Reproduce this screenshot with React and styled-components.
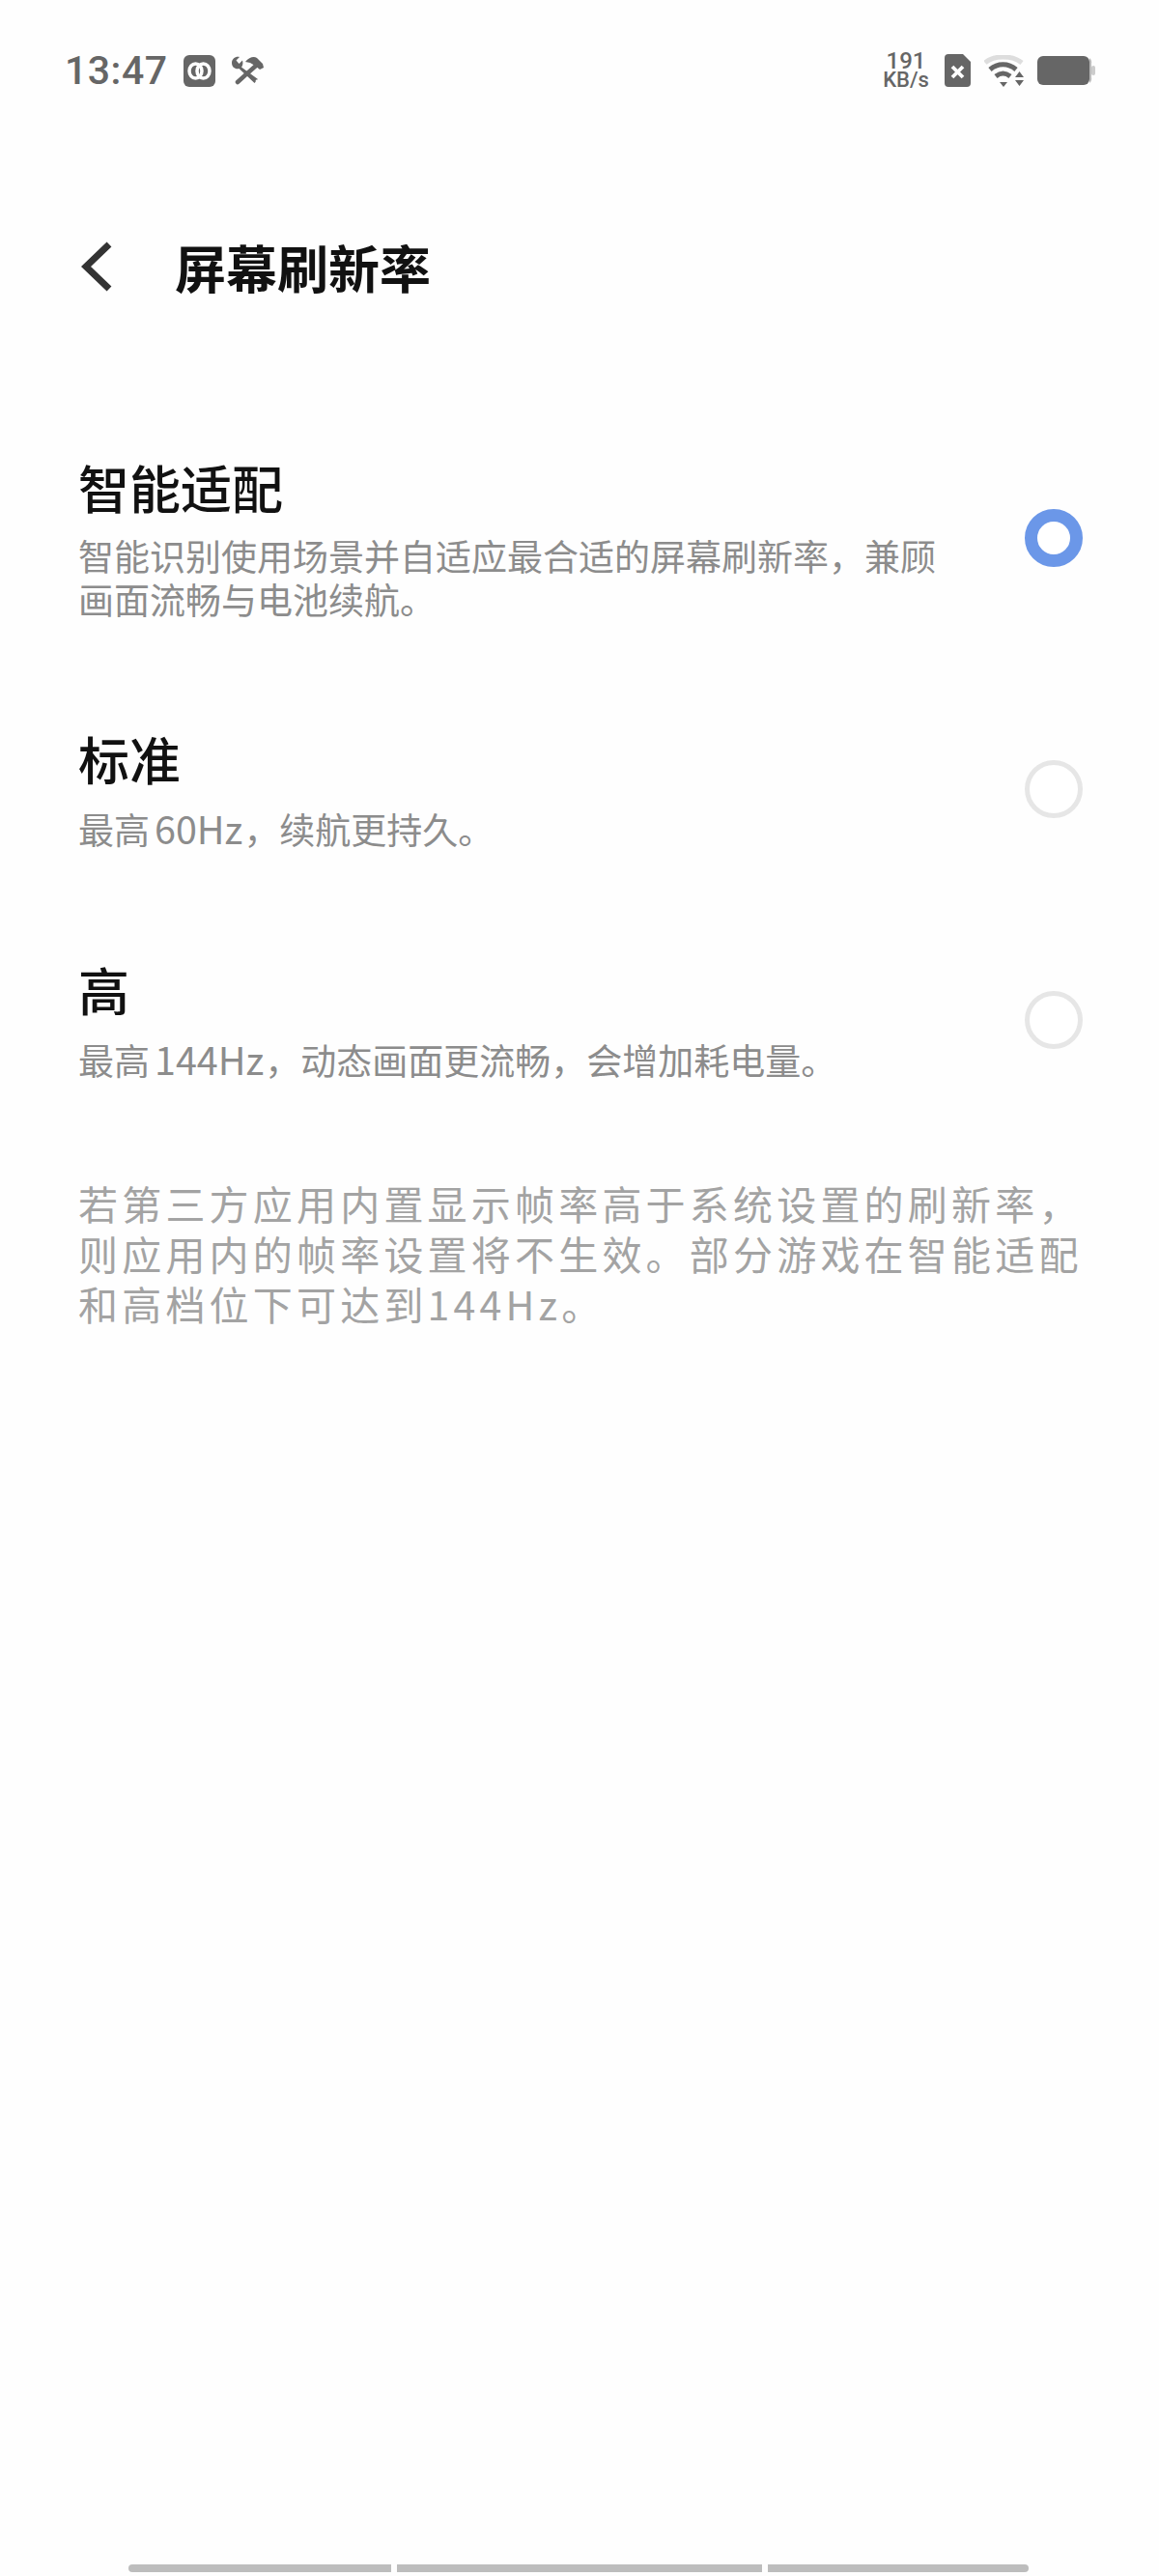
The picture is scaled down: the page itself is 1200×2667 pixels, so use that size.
import React from "react";
import styled, { createGlobalStyle } from "styled-components";

const cjk = `"Noto Sans CJK SC", "Noto Sans", sans-serif`;

const GlobalStyle = createGlobalStyle`
  html, body {
    margin: 0;
    padding: 0;
    background: #fefefe;
  }
  * {
    box-sizing: border-box;
  }
`;

const Page = styled.div`
  width: 1200px;
  height: 2667px;
  display: flex;
  flex-direction: column;
  background: #fefefe;
  font-family: ${cjk};
  overflow: hidden;
`;

const StatusBar = styled.div`
  height: 74px;
  margin-top: 36px;
  padding: 0 66px 0 67px;
  display: flex;
  align-items: center;
  justify-content: space-between;
  color: #666;
`;

const StatusGroup = styled.div`
  display: flex;
  align-items: center;
  gap: ${(p) => p.$gap || 16}px;
`;

const Clock = styled.span`
  font-family: "Roboto", sans-serif;
  font-size: 41px;
  font-weight: 500;
  letter-spacing: 0.5px;
`;

const NetSpeed = styled.div`
  text-align: center;
  font-family: "Roboto", sans-serif;
  font-weight: 500;
  line-height: 20px;
  font-size: 22px;
  &::first-line {
    font-size: 24px;
  }
`;

const Header = styled.div`
  height: 110px;
  margin-top: 111px;
  padding-left: 84px;
  display: flex;
  align-items: center;
  gap: 65px;
`;

const Title = styled.h1`
  margin: 0;
  font-size: 53px;
  font-weight: 600;
  color: #111;
`;

const List = styled.div`
  margin-top: 86px;
  display: flex;
  flex-direction: column;
`;

const Option = styled.div`
  height: ${(p) => p.$height}px;
  padding: 0 79px 0 81px;
  display: flex;
  align-items: center;
  justify-content: space-between;
`;

const OptionText = styled.div`
  width: 900px;
  padding-bottom: 2px;
`;

const OptionTitle = styled.div`
  font-size: 53px;
  line-height: 70px;
  margin-bottom: 14px;
  font-weight: 500;
  color: #111;
`;

const OptionDesc = styled.div`
  font-size: 37px;
  line-height: 45px;
  color: #8c8c8c;
`;

const Latin = styled.span`
  font-size: 39.5px;
  margin: 0 1px 0 5px;
`;

const Radio = styled.div`
  width: 60px;
  height: 60px;
  border-radius: 50%;
  flex-shrink: 0;
  border: ${(p) => (p.$checked ? "13px solid #6b97e8" : "5px solid #e6e6e6")};
  background: #fff;
`;

const Note = styled.p`
  margin: 44px 0 0;
  padding: 0 79px 0 81px;
  font-size: 41px;
  line-height: 52px;
  letter-spacing: 4.2px;
  color: #a3a3a3;
`;

const NavBar = styled.div`
  margin-top: auto;
  margin-bottom: 4px;
  padding-left: 133px;
  display: flex;
  gap: 6px;
`;

const NavSegment = styled.div`
  width: ${(p) => p.$width}px;
  height: 8px;
  background: #bdbdbd;
  border-radius: ${(p) => p.$radius};
`;

const DualSimIcon = () => (
  <svg width="33" height="33" viewBox="0 0 33 33">
    <rect width="33" height="33" rx="6" fill="#666" />
    <ellipse cx="12.5" cy="16.5" rx="6.5" ry="7.5" fill="none" stroke="#fff" strokeWidth="3.5" />
    <ellipse cx="20.5" cy="16.5" rx="6.5" ry="7.5" fill="none" stroke="#fff" strokeWidth="3.5" />
  </svg>
);

const ToolsIcon = () => (
  <svg width="34" height="30" viewBox="0 0 34 30" fill="none">
    <path
      d="M1 7 C1 3 5 0 9 1 L5.5 4.5 L8.5 8 L12 4.5 C13 8 12 10 11 11.5 L28 24 L24.5 28 L8.5 13 C5 14 1 12 1 7 Z"
      fill="#666"
    />
    <circle cx="27" cy="26" r="1.4" fill="#fff" />
    <path d="M26 10 L7 27" stroke="#666" strokeWidth="4.5" strokeLinecap="round" />
    <path d="M15 6 C19 1 24 0 27 2 L33 8 L34 12 L30 14 L25 10 L20 7 Z" fill="#666" />
  </svg>
);

const SimIcon = () => (
  <svg width="27" height="34" viewBox="0 0 27 34">
    <path d="M4 0 H19 L27 8 V30 a4 4 0 0 1 -4 4 H4 a4 4 0 0 1 -4 -4 V4 a4 4 0 0 1 4 -4 Z" fill="#666" />
    <path d="M8 13 L19 24 M19 13 L8 24" stroke="#fff" strokeWidth="3.8" />
  </svg>
);

const WifiIcon = () => (
  <svg width="41" height="33" viewBox="0 0 41 33" fill="none">
    <path d="M1 8 C10 0 29 0 39 8" stroke="#ddd" strokeWidth="5" />
    <path d="M6 15 C14 8 25 8 33 15" stroke="#666" strokeWidth="5" />
    <path d="M12 22 C17 18 22 18 27 22" stroke="#666" strokeWidth="5" />
    <path d="M16 28 L24 28 L20 33 Z" fill="#666" />
    <path d="M32 23 H41 L36.5 17 Z M32 26 H41 L36.5 32 Z" fill="#666" />
  </svg>
);

const BatteryIcon = () => (
  <svg width="60" height="30" viewBox="0 0 60 30">
    <rect width="54" height="30" rx="6" fill="#666" />
    <path d="M54 2 a6 6 0 0 1 2 6 V22 a6 6 0 0 1 -2 6 Z" fill="#bbb" />
    <rect x="56" y="10" width="4" height="10" rx="2" fill="#ccc" />
  </svg>
);

const BackIcon = () => (
  <svg width="32" height="52" viewBox="0 0 32 52" fill="none">
    <path d="M29 3 L5 26 L29 49" stroke="#333" strokeWidth="7" />
  </svg>
);

const options = [
  {
    title: "智能适配",
    desc: "智能识别使用场景并自适应最合适的屏幕刷新率，兼顾画面流畅与电池续航。",
    height: 280,
    checked: true,
  },
  {
    title: "标准",
    desc: (
      <>
        最高<Latin>60Hz</Latin>，续航更持久。
      </>
    ),
    height: 239,
  },
  {
    title: "高",
    desc: (
      <>
        最高<Latin>144Hz</Latin>，动态画面更流畅，会增加耗电量。
      </>
    ),
    height: 239,
  },
];

export default function App() {
  return (
    <>
      <GlobalStyle />
      <Page>
        <StatusBar>
          <StatusGroup>
            <Clock>13:47</Clock>
            <DualSimIcon />
            <ToolsIcon />
          </StatusGroup>
          <StatusGroup $gap={14}>
            <NetSpeed>
              191
              <br />
              KB/s
            </NetSpeed>
            <SimIcon />
            <WifiIcon />
            <BatteryIcon />
          </StatusGroup>
        </StatusBar>
        <Header>
          <BackIcon />
          <Title>屏幕刷新率</Title>
        </Header>
        <List>
          {options.map((o) => (
            <Option key={o.title} $height={o.height}>
              <OptionText>
                <OptionTitle>{o.title}</OptionTitle>
                <OptionDesc>{o.desc}</OptionDesc>
              </OptionText>
              <Radio $checked={o.checked} />
            </Option>
          ))}
        </List>
        <Note>
          若第三方应用内置显示帧率高于系统设置的刷新率，则应用内的帧率设置将不生效。部分游戏在智能适配和高档位下可达到144Hz。
        </Note>
        <NavBar>
          <NavSegment $width={272} $radius="4px 0 0 4px" />
          <NavSegment $width={378} $radius="0" />
          <NavSegment $width={270} $radius="0 4px 4px 0" />
        </NavBar>
      </Page>
    </>
  );
}
